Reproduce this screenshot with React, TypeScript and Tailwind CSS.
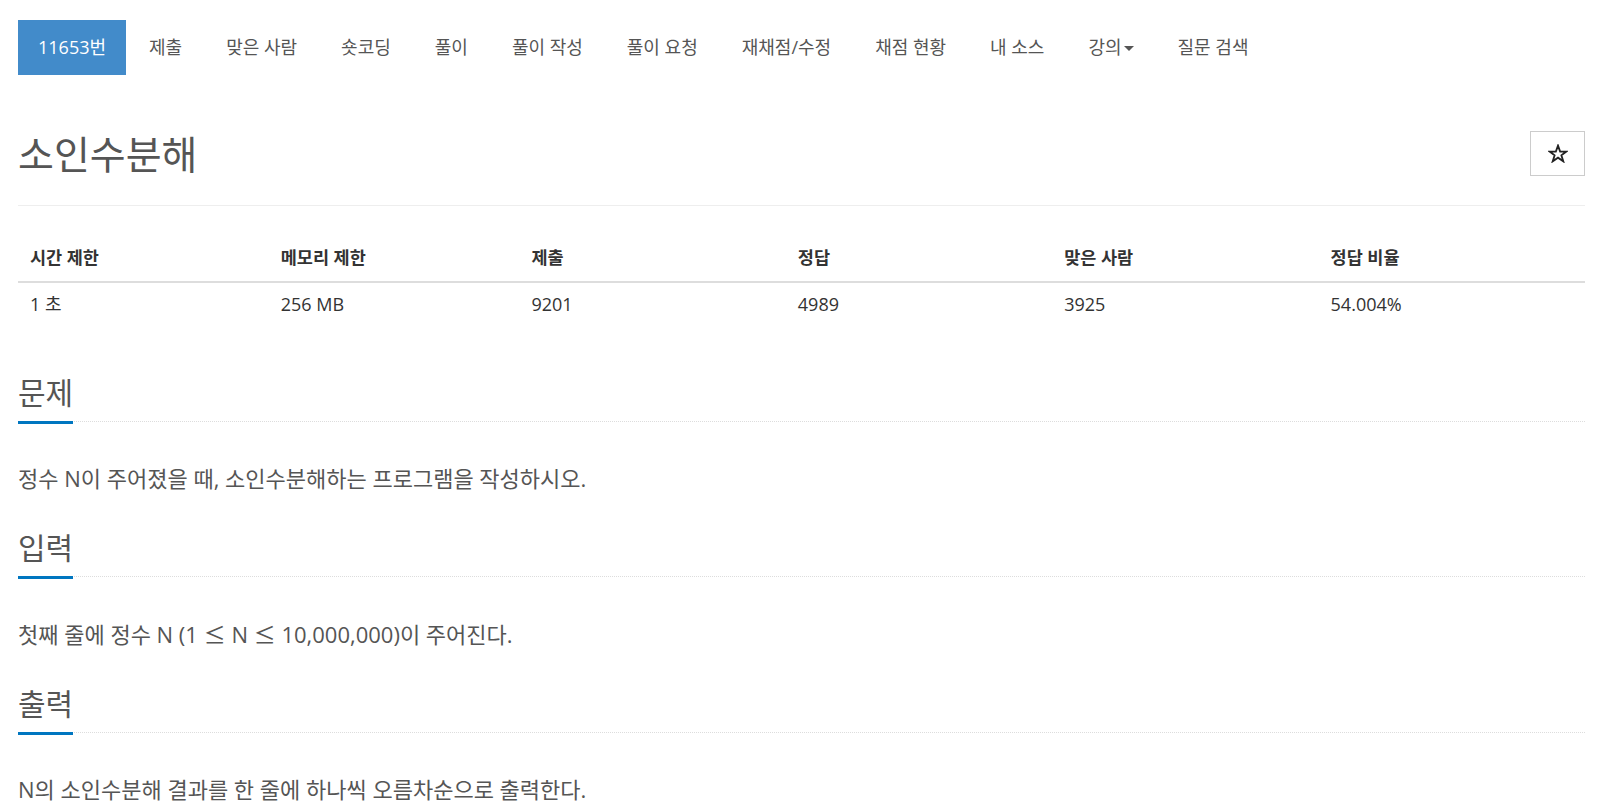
import type { ReactNode } from 'react';

const font = "font-['Open_Sans','Noto_Sans_CJK_KR',sans-serif]";

const tabs = ['제출', '맞은 사람', '숏코딩', '풀이', '풀이 작성', '풀이 요청', '재채점/수정', '채점 현황', '내 소스', '강의', '질문 검색'];

const stats = [
  { label: '시간 제한', value: '1 초', w: 'w-[16%]' },
  { label: '메모리 제한', value: '256 MB', w: 'w-[16%]' },
  { label: '제출', value: '9201', w: 'w-[17%]' },
  { label: '정답', value: '4989', w: 'w-[17%]' },
  { label: '맞은 사람', value: '3925', w: 'w-[17%]' },
  { label: '정답 비율', value: '54.004%', w: 'w-[17%]' },
];

const Le = () => <span className="font-['Noto_Sans_CJK_KR',sans-serif]">≤</span>;

const sections: { title: string; body: ReactNode }[] = [
  { title: '문제', body: '정수 N이 주어졌을 때, 소인수분해하는 프로그램을 작성하시오.' },
  {
    title: '입력',
    body: (
      <>
        첫째 줄에 정수 N (1 <Le /> N <Le /> 10,000,000)이 주어진다.
      </>
    ),
  },
  { title: '출력', body: 'N의 소인수분해 결과를 한 줄에 하나씩 오름차순으로 출력한다.' },
];

function Section({ title, body }: { title: string; body: ReactNode }) {
  return (
    <section className="mt-[37px] first:mt-0">
      <div className="border-b border-dotted border-[#dddddd]">
        <h2 className="inline-block -mb-[3px] border-b-[3px] border-[#0076c0] pb-[10px] text-[30px] leading-[36px] font-normal text-[#555555]">
          {title}
        </h2>
      </div>
      <p className="mt-[41px] text-[22px] leading-[30px] text-[#555555]">{body}</p>
    </section>
  );
}

export default function App() {
  return (
    <div className={`${font} bg-white min-h-[812px] pl-[18px] pr-[12px] pt-[20px] text-[#333333]`}>
      <ul className="flex items-center gap-[2px] text-[18px]">
        <li className="h-[55px] flex items-center px-[20px] bg-[#428bca] text-white">11653번</li>
        {tabs.map((t) => (
          <li key={t} className="h-[55px] flex items-center px-[21px] text-[#555555]">
            {t}
            {t === '강의' && (
              <span className="ml-[2px] inline-block w-0 h-0 border-x-[5px] border-x-transparent border-t-[5px] border-t-[#555555] translate-y-[1px]" />
            )}
          </li>
        ))}
      </ul>

      <div className="mt-[56px] flex items-center justify-between h-[45px]">
        <h1 className="text-[39px] leading-[45px] font-normal text-[#555555]">소인수분해</h1>
        <button className="w-[55px] h-[45px] border border-[#cccccc] bg-white flex items-center justify-center">
          <svg width="20" height="19" viewBox="0 0 24 23" fill="none" stroke="#222222" strokeWidth="2.2" strokeLinejoin="miter">
            <path d="M12 2 L14.6 9.2 L22.2 9.2 L16.1 13.7 L18.4 21 L12 16.6 L5.6 21 L7.9 13.7 L1.8 9.2 L9.4 9.2 Z" />
          </svg>
        </button>
      </div>
      <div className="mt-[29px] border-t border-[#eeeeee]" />

      <table className="mt-[28px] w-full border-collapse">
        <thead>
          <tr className="border-b-2 border-[#dddddd]">
            {stats.map((s) => (
              <th key={s.label} className={`${s.w} h-[48px] pl-[12px] text-left text-[17.5px] font-bold text-[#333333] align-middle`}>
                {s.label}
              </th>
            ))}
          </tr>
        </thead>
        <tbody>
          <tr>
            {stats.map((s) => (
              <td key={s.label} className="h-[44px] pl-[12px] text-[18px] text-[#333333] align-middle">
                {s.value}
              </td>
            ))}
          </tr>
        </tbody>
      </table>

      <div className="mt-[49px] pb-[20px]">
        {sections.map((s) => (
          <Section key={s.title} title={s.title} body={s.body} />
        ))}
      </div>
    </div>
  );
}
